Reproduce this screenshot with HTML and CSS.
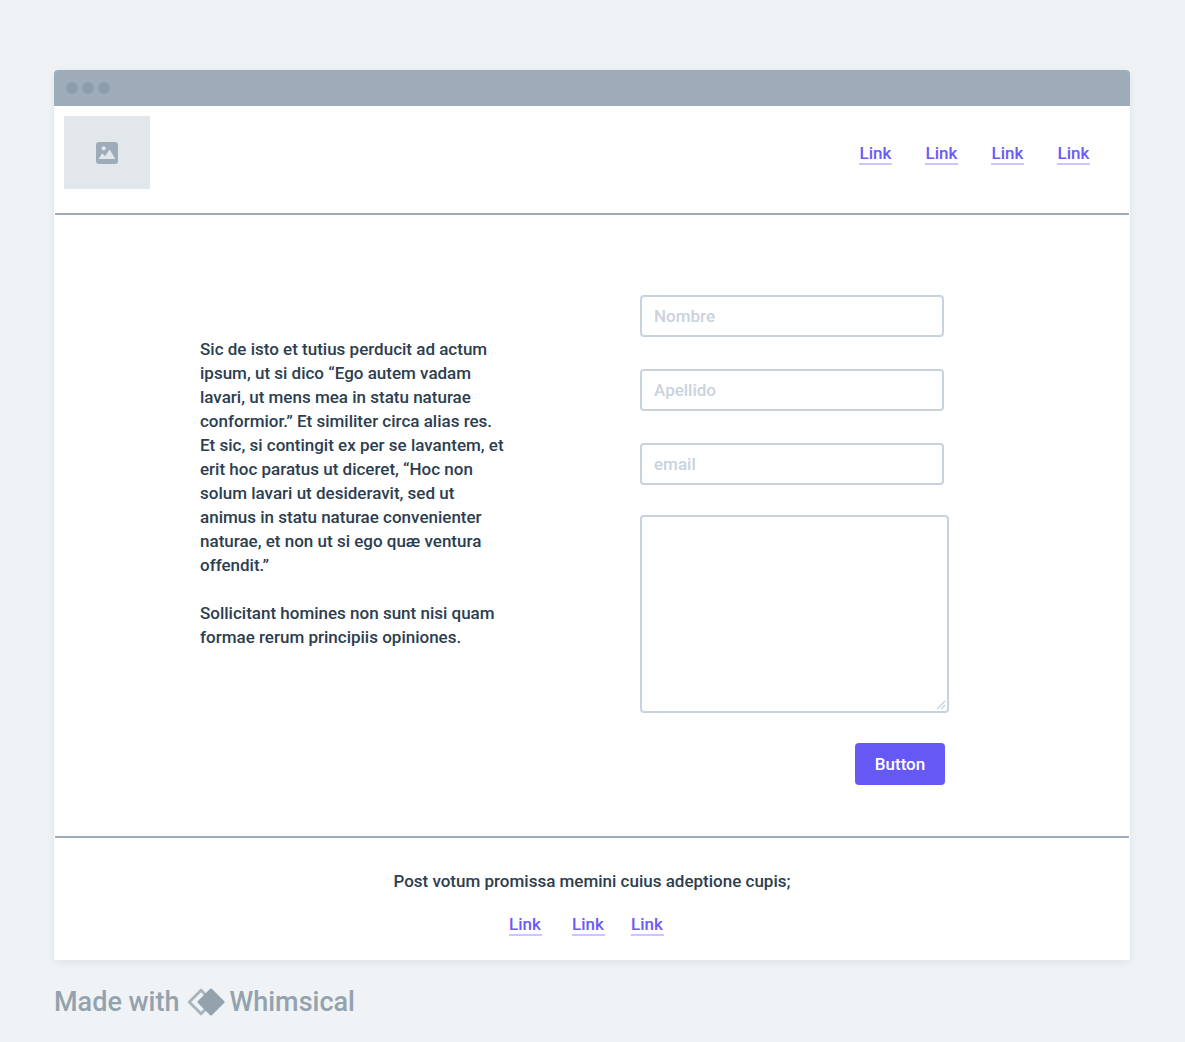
FILE: index.html
```html
<!DOCTYPE html>
<html lang="es">
<head>
<meta charset="utf-8">
<meta name="viewport" content="width=device-width, initial-scale=1">
<title>Contacto</title>
<link rel="stylesheet" href="styles.css">
</head>
<body>
<div class="window">
  <div class="titlebar"><span class="dot"></span><span class="dot"></span><span class="dot"></span></div>
  <header class="header">
    <div class="logo">
      <svg width="22" height="22" viewBox="0 0 22 22" aria-hidden="true">
        <rect width="22" height="22" rx="3" fill="#9dacb8"/>
        <circle cx="7.7" cy="6.3" r="2.1" fill="#e2e7eb"/>
        <path d="M2.6 17L6.2 11.2L9 14.2L13.7 7.6L19.2 17Z" fill="#e2e7eb"/>
      </svg>
    </div>
    <nav class="nav">
      <a class="link" href="#">Link</a>
      <a class="link" href="#">Link</a>
      <a class="link" href="#">Link</a>
      <a class="link" href="#">Link</a>
    </nav>
  </header>
  <main class="main">
    <div class="copy">
      <p>Sic de isto et tutius perducit ad actum<br>ipsum, ut si dico “Ego autem vadam<br>lavari, ut mens mea in statu naturae<br>conformior.” Et similiter circa alias res.<br>Et sic, si contingit ex per se lavantem, et<br>erit hoc paratus ut diceret, “Hoc non<br>solum lavari ut desideravit, sed ut<br>animus in statu naturae convenienter<br>naturae, et non ut si ego quæ ventura<br>offendit.”</p>
      <p>Sollicitant homines non sunt nisi quam<br>formae rerum principiis opiniones.</p>
    </div>
    <form class="form">
      <div class="fields">
        <input class="field" type="text" placeholder="Nombre" aria-label="Nombre">
        <input class="field" type="text" placeholder="Apellido" aria-label="Apellido">
        <input class="field" type="email" placeholder="email" aria-label="email">
      </div>
      <div class="message">
        <textarea class="textarea" aria-label="Mensaje"></textarea>
        <svg class="grip" width="10" height="10" viewBox="0 0 10 10" aria-hidden="true">
          <path d="M1 9L9 1M5 9L9 5" fill="none" stroke="#c9d3dd" stroke-width="1.5"/>
        </svg>
      </div>
      <button class="button" type="button">Button</button>
    </form>
  </main>
  <footer class="footer">
    <p>Post votum promissa memini cuius adeptione cupis;</p>
    <nav class="footer-nav">
      <a class="link link-first" href="#">Link</a>
      <a class="link" href="#">Link</a>
      <a class="link" href="#">Link</a>
    </nav>
  </footer>
</div>
<div class="credit">
  <span class="made">Made with</span>
  <svg width="38" height="28" viewBox="0 0 38 28" aria-hidden="true">
    <path d="M14 2.2L2.3 14L14 25.8L25.7 14Z" fill="none" stroke="#a9b5be" stroke-width="3" stroke-linejoin="round"/>
    <path d="M24 2L36 14L24 26L12 14Z" fill="#94a2ad" stroke="#94a2ad" stroke-width="3" stroke-linejoin="round"/>
  </svg>
  <span class="brand">Whimsical</span>
</div>
</body>
</html>
```
FILE: styles.css
```css
* { box-sizing: border-box; }
body {
  margin: 0;
  padding: 70px 55px 24px 54px;
  background: #eff3f6;
  color: #2c3e50;
  font: 500 17px/24px Roboto, "Liberation Sans", sans-serif;
}
p { margin: 0; }
.window {
  background: #fff;
  border-radius: 4px 4px 0 0;
  box-shadow: 0 2px 8px rgba(60, 80, 100, 0.1);
}
.titlebar {
  display: flex;
  align-items: center;
  gap: 4px;
  height: 36px;
  padding: 0 12px;
  background: #9dacb8;
  border-radius: 4px 4px 0 0;
}
.dot {
  width: 12px;
  height: 12px;
  border-radius: 50%;
  background: #8d9dab;
}
.header {
  display: flex;
  justify-content: space-between;
  align-items: flex-start;
  margin: 0 1px;
  padding: 10px 39px 24px 9px;
  border-bottom: 2px solid #9dacb8;
}
.logo {
  display: flex;
  align-items: center;
  justify-content: center;
  width: 86px;
  height: 73px;
  background: #e2e7eb;
}
.nav {
  display: flex;
  gap: 33px;
  padding-top: 25px;
}
.link {
  min-width: 33px;
  height: 24px;
  color: #6b5bf5;
  text-align: center;
  text-decoration: none;
  border-bottom: 2px solid #cdc6fc;
}
.main {
  display: grid;
  grid-template-columns: 1fr 309px;
  margin: 0 1px;
  padding: 80px 180px 51px 145px;
  border-bottom: 2px solid #9dacb8;
}
.copy {
  display: flex;
  flex-direction: column;
  gap: 24px;
  padding-top: 42px;
}
.form {
  display: flex;
  flex-direction: column;
  gap: 30px;
}
.fields {
  display: flex;
  flex-direction: column;
  gap: 32px;
  padding-right: 5px;
}
.field, .textarea {
  display: block;
  width: 100%;
  padding: 0 12px;
  border: 2px solid #c9d3dd;
  border-radius: 4px;
  background: #fff;
  color: inherit;
  font: inherit;
}
.field { height: 42px; }
.field::placeholder { color: #c9d3dd; }
.message { position: relative; }
.textarea {
  height: 198px;
  resize: none;
}
.grip {
  position: absolute;
  right: 3px;
  bottom: 3px;
}
.button {
  align-self: flex-end;
  width: 90px;
  height: 42px;
  margin-right: 4px;
  padding: 0;
  border: 0;
  border-radius: 4px;
  background: #6558f5;
  color: #fff;
  font: inherit;
}
.footer {
  display: flex;
  flex-direction: column;
  align-items: center;
  gap: 19px;
  padding: 31px 24px 24px;
}
.footer-nav {
  display: flex;
  gap: 26px;
  padding-right: 12px;
}
.link-first { margin-right: 4px; }
.credit {
  display: flex;
  align-items: center;
  margin-top: 26px;
  color: #94a2ad;
  font-size: 27px;
  line-height: 32px;
}
.made { margin-right: 8px; }
.brand { margin-left: 4px; }
```
